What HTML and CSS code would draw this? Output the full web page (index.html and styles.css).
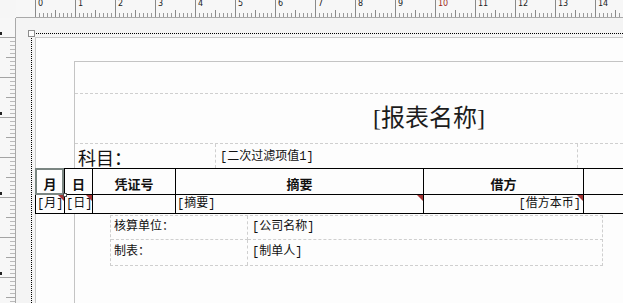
FILE: index.html
```html
<!DOCTYPE html>
<html lang="zh-CN">
<head>
  <meta charset="UTF-8" />
  <title>报表设计</title>
  <link rel="stylesheet" href="styles.css">
</head>
<body>
  <div class="app">
    <div class="corner"></div>

    <div class="ruler-top">
      <span class="cm"><b>0</b></span>
      <span class="cm"><b>1</b></span>
      <span class="cm"><b>2</b></span>
      <span class="cm"><b>3</b></span>
      <span class="cm"><b>4</b></span>
      <span class="cm"><b>5</b></span>
      <span class="cm"><b>6</b></span>
      <span class="cm"><b>7</b></span>
      <span class="cm"><b>8</b></span>
      <span class="cm"><b>9</b></span>
      <span class="cm cur"><b>10</b></span>
      <span class="cm"><b>11</b></span>
      <span class="cm"><b>12</b></span>
      <span class="cm"><b>13</b></span>
      <span class="cm"><b>14</b></span>
      <span class="cm"></span>
    </div>

    <div class="ruler-left">
      <span class="cm-v mark"></span>
      <span class="cm-v"></span>
      <span class="cm-v mark"></span>
      <span class="cm-v"></span>
      <span class="cm-v mark"></span>
      <span class="cm-v"></span>
      <span class="cm-v mark"></span>
    </div>

    <div class="canvas">
      <div class="selection">
        <span class="handle"></span>
        <div class="page">
          <div class="sheet">
            <div class="band band-blank"></div>
            <div class="band band-title">
              <h1 class="title">[报表名称]</h1>
            </div>
            <div class="band-subject">
              <span class="subject-label">科目：</span>
              <span class="filter-box">[二次过滤项值1]</span>
            </div>

            <div class="grid">
              <div class="cell head selected">月</div>
              <div class="cell head">日</div>
              <div class="cell head">凭证号</div>
              <div class="cell head">摘要</div>
              <div class="cell head">借方</div>
              <div class="cell head"></div>

              <div class="cell data flag">[月]</div>
              <div class="cell data flag">[日]</div>
              <div class="cell data"></div>
              <div class="cell data flag">[摘要]</div>
              <div class="cell data flag right">[借方本币]</div>
              <div class="cell data"></div>
            </div>

            <div class="footer-box">
              <div class="f-label">核算单位：</div>
              <div class="f-value">[公司名称]</div>
              <div class="f-label last">制表：</div>
              <div class="f-value last">[制单人]</div>
            </div>
          </div>
        </div>
      </div>
    </div>
  </div>
</body>
</html>
```

FILE: styles.css
```css
html, body {
  margin: 0;
  height: 100%;
  overflow: hidden;
}
body {
  background: #f4f4f4;
  color: #111;
  font-family: "Liberation Mono", "Noto Sans CJK SC", monospace;
}
.app {
  display: grid;
  grid-template-columns: 16px 1fr;
  grid-template-rows: 18px 1fr;
  height: 303px;
}
.corner {
  background: #f6f6f6;
}

/* rulers */
.ruler-top {
  display: flex;
  padding-left: 19px;
  background: #f7f7f7;
  border-bottom: 1px solid #a9a9a9;
  overflow: hidden;
}
.cm {
  flex: 0 0 40px;
  box-sizing: border-box;
  border-left: 1px solid #8a8a8a;
  height: 17px;
  background:
    linear-gradient(#8a8a8a, #8a8a8a) 19px 100% / 1px 7px no-repeat,
    repeating-linear-gradient(to right, transparent 0 3px, #9a9a9a 3px 4px) 0 100% / 100% 4px no-repeat;
}
.cm b {
  display: block;
  margin: 0 0 0 2px;
  font: 400 8px/8px "DejaVu Sans", sans-serif;
  color: #222;
}
.cm.cur b {
  color: #a02a1a;
}
.ruler-left {
  display: flex;
  flex-direction: column;
  padding-top: 19px;
  background: #f7f7f7;
  border-right: 1px solid #a9a9a9;
  overflow: hidden;
}
.cm-v {
  position: relative;
  flex: 0 0 40px;
  box-sizing: border-box;
  border-top: 1px solid #a4a4a4;
  background:
    linear-gradient(#a4a4a4, #a4a4a4) 100% 19px / 9px 1px no-repeat,
    repeating-linear-gradient(to bottom, transparent 0 3px, #bababa 3px 4px) 100% 0 / 5px 100% no-repeat;
}
.mark::before {
  content: "";
  position: absolute;
  left: 0;
  top: -6px;
  width: 2px;
  height: 3px;
  background: #222;
}

/* design canvas */
.canvas {
  padding: 15px 0 0 15px;
  overflow: hidden;
}
.selection {
  position: relative;
  padding: 3px 0 0 3px;
  border-top: 1px dotted #000;
  border-left: 1px dotted #000;
  height: 100%;
}
.handle {
  position: absolute;
  left: -4px;
  top: -4px;
  width: 5px;
  height: 5px;
  border: 1px solid #8c8c8c;
  background: #fdfdfd;
}
.page {
  height: 100%;
  border-top: 1px solid #c8c8c8;
  border-left: 1px solid #c8c8c8;
  background: #fdfdfd;
}
.sheet {
  margin: 23px 0 0 38px;
  width: 708px;
  height: 400px;
  border-top: 1px solid #c4c4c4;
  border-left: 1px solid #c4c4c4;
}
.band {
  border-bottom: 1px dashed #cfcfcf;
}
.band-blank {
  height: 31px;
}
.band-title {
  height: 49px;
}
.title {
  margin: 0;
  padding-top: 12px;
  text-align: center;
  font: 400 24px/24px "Liberation Serif", "Noto Sans CJK SC", serif;
  color: #1c1c1c;
}
.band-subject {
  display: flex;
  height: 24px;
}
.subject-label {
  width: 137px;
  padding-left: 3px;
  font: 18px/26px "Noto Sans CJK SC", sans-serif;
}
.filter-box {
  width: 357px;
  padding: 4px 0 0 4px;
  border-left: 1px dashed #cfcfcf;
  border-right: 1px dashed #cfcfcf;
  font-size: 12px;
  line-height: 18px;
}

/* detail grid */
.grid {
  display: grid;
  grid-template-columns: 29px 28px 83px 248px 160px 150px;
  grid-template-rows: 26px 19px;
  margin-left: -40px;
  border-top: 1px solid #000;
  border-left: 1px solid #000;
  background: #fdfdfd;
}
.cell {
  position: relative;
  box-sizing: border-box;
  border-right: 1px solid #000;
  border-bottom: 1px solid #000;
  white-space: nowrap;
}
.head {
  display: flex;
  align-items: flex-end;
  justify-content: center;
  padding-bottom: 2px;
  font: 700 13px/16px "Noto Sans CJK SC", sans-serif;
}
.data {
  padding: 0 1px;
  font-size: 12px;
  line-height: 18px;
}
.data.right {
  text-align: right;
  padding-right: 2px;
}
.selected::before {
  content: "";
  position: absolute;
  left: -1px;
  top: -1px;
  right: 0;
  bottom: -1px;
  border: 2px solid #7b8682;
}
.selected::after {
  content: "";
  position: absolute;
  right: -3px;
  bottom: -3px;
  width: 2px;
  height: 2px;
  border: 1px solid #505050;
  background: #fff;
  z-index: 1;
}
.flag::after {
  content: "";
  position: absolute;
  top: 0;
  right: 0;
  border-top: 6px solid #a53535;
  border-left: 6px solid transparent;
}

/* footer */
.footer-box {
  display: grid;
  grid-template-columns: 137px 355px;
  grid-template-rows: 24px 25px;
  width: 493px;
  box-sizing: border-box;
  margin: 1px 0 0 35px;
  border: 1px dashed #cfcfcf;
  font-size: 12px;
}
.f-label,
.f-value {
  border-bottom: 1px dashed #cfcfcf;
  line-height: 22px;
}
.f-label {
  padding-left: 3px;
  border-right: 1px dashed #cfcfcf;
}
.f-value {
  padding-left: 4px;
}
.last {
  border-bottom: none;
  line-height: 24px;
}
```
